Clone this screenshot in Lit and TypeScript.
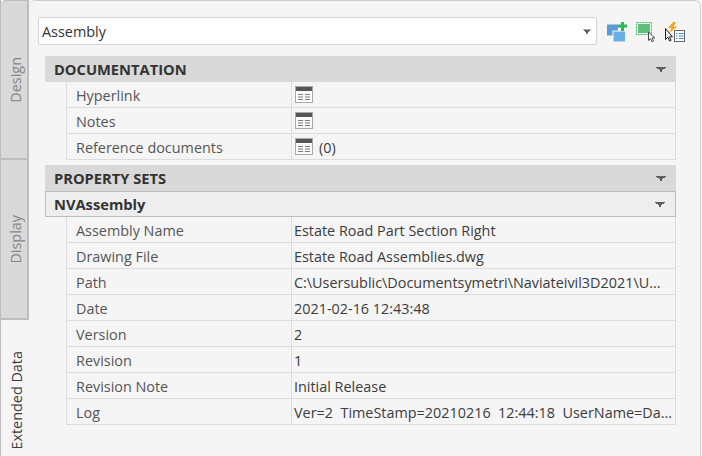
import { LitElement, html, css } from "lit";
import { customElement } from "lit/decorators.js";

const tableIcon = html`<svg class="ti" width="18" height="17" viewBox="0 0 18 17">
  <rect x="0.5" y="0.5" width="17" height="16" fill="#fafafa" stroke="#a8a8a8"/>
  <rect x="1" y="1" width="16" height="4" fill="#555"/>
  <path d="M3 8.500h5M10 8.500h5M3 11h5M10 11h5M3 13.500h5M10 13.500h5" stroke="#7c7c7c" stroke-width="1" fill="none"/>
</svg>`;

const caret = html`<svg class="caret" width="10" height="5" viewBox="0 0 10 5" shape-rendering="crispEdges"><path d="M0 0h10v1h-1v1h-2v1h-1v2h-2v-2h-1v-1h-2v-1h-1z" fill="#5f5f5f"/></svg>`;

@customElement("app-root")
export class AppRoot extends LitElement {
  static styles = css`
    :host { display: flex; width: 702px; height: 456px; overflow: hidden; background: #fafafa; box-sizing: border-box; padding-right: 1px;
      font-family: "Open Sans", "Noto Sans", sans-serif; font-size: 14.4px; color: #3c3c3c; }
    .rail { width: 29px; flex: none; display: flex; flex-direction: column; background: #f5f5f5; border-left: 1px solid #bdbdbd; box-sizing: border-box; }
    .tab { box-sizing: border-box; width: 28px; height: 160px; flex: none; display: flex; align-items: center; justify-content: center; padding-left: 2px; }
    .tab span { writing-mode: vertical-rl; transform: rotate(180deg); white-space: nowrap; }
    .tab.off { background: #d9d9d9; border-right: 2px solid #bdbdbd; border-bottom: 2px solid #bdbdbd; color: #858585; }
    .tab.first { border-top: 1px solid #bdbdbd; border-top-left-radius: 5px; }
    .tab.on { color: #3c3c3c; }
    .main { flex: 1; box-sizing: border-box; padding: 16px 15px 0 9px; background: #f5f5f5; border-top: 1px solid #cfcfcf; border-right: 1px solid #cfcfcf; border-top-left-radius: 6px; border-top-right-radius: 6px; }
    .top { display: flex; align-items: center; height: 28px; }
    .combo { width: 559px; height: 28px; flex: none; box-sizing: border-box; background: #fff; border: 1px solid #d4d4d4; border-radius: 2px; display: flex; align-items: center; justify-content: space-between; padding: 0 4px 0 3px; color: #333; }
    .combo .caret { transform: scale(0.85); }
    .tools { display: flex; align-items: center; gap: 9px; margin-left: 10px; padding-top: 2px; }
    .tools svg { display: block; flex: none; }
    .content { margin: 11px 9px 0 7px; display: flex; flex-direction: column; }
    .hd { height: 26px; box-sizing: border-box; display: flex; align-items: center; justify-content: space-between; padding: 0 10px 0 9px; background: #d9d9d9; font-weight: 700; font-size: 14.7px; color: #333; }
    .hd.sub { background: #eeeeee; border: 1px solid #bcbcbc; padding: 0 10px 0 8px; }
    .rows { border-left: 1px solid #dcdcdc; border-right: 1px solid #dcdcdc; margin-left: 21px; }
    .rows.gap { margin-bottom: 5px; }
    .row { height: 26px; box-sizing: border-box; border-bottom: 1px solid #dcdcdc; display: grid; grid-template-columns: 224px 1fr; }
    .row .k { padding: 2px 0 0 9px; display: flex; align-items: center; color: #555; white-space: nowrap; }
    .row .v { border-left: 1px solid #dcdcdc; display: flex; align-items: center; padding-left: 2px; min-width: 0; gap: 6px; color: #3c3c3c; }
    .row .t { white-space: pre; padding-top: 2px; }
    .ti { display: block; margin: -1px 0 0 1px; }
  `;

  private row(k: string, v: unknown) {
    return html`<div class="row"><div class="k">${k}</div><div class="v">${v}</div></div>`;
  }

  render() {
    const vals: [string, string][] = [
      ["Assembly Name", "Estate Road Part Section Right"],
      ["Drawing File", "Estate Road Assemblies.dwg"],
      ["Path", "C:\\Usersublic\\Documentsymetri\\Naviateivil3D2021\\U..."],
      ["Date", "2021-02-16 12:43:48"],
      ["Version", "2"],
      ["Revision", "1"],
      ["Revision Note", "Initial Release"],
      ["Log", "Ver=2  TimeStamp=20210216  12:44:18  UserName=Da..."],
    ];
    return html`
      <div class="rail">
        <div class="tab off first"><span>Design</span></div>
        <div class="tab off"><span>Display</span></div>
        <div class="tab on"><span>Extended Data</span></div>
      </div>
      <div class="main">
        <div class="top">
          <div class="combo"><span>Assembly</span>${caret}</div>
          <div class="tools">
            <svg width="20" height="20" viewBox="0 0 20 20">
              <rect x="0" y="2.500" width="11" height="11" fill="#5b9bd5"/>
              <rect x="6" y="9" width="12.500" height="11" fill="#6aaee6" stroke="#f5f5f5"/>
              <path d="M11 4h9M15.500 0v9" stroke="#2fb457" stroke-width="3" fill="none"/>
            </svg>
            <svg width="20" height="20" viewBox="0 0 20 20">
              <rect x="0.500" y="0.500" width="15" height="12" fill="#f0f7f2" stroke="#45b36c" stroke-dasharray="2 1"/>
              <rect x="2" y="2" width="12" height="9" fill="#60bf7c"/>
              <path d="M12.500 10v8.500l2-1.800 1.500 3.100 1.600-.8-1.500-3h2.700z" fill="#f4f4f4" stroke="#4a4a4a"/>
            </svg>
            <svg width="20" height="20" viewBox="0 0 20 20">
              <path d="M8 0l-5 6h3.500l-2 5 7.500-6.500h-3.500l2.500-4.500z" fill="#f0a820"/>
              <path d="M0.500 6.500v11l2.300-2.300 1.800 3.800 1.500-.7-1.700-3.500h3z" fill="#f4f4f4" stroke="#1f1f1f"/>
              <rect x="9.500" y="8.500" width="10" height="11" fill="#fff" stroke="#666"/>
              <path d="M11 11.500h1.500M14 11.500h4.500M11 14h1.500M14 14h4.500M11 16.500h1.500M14 16.500h4.500" stroke="#3b8ad0"/>
            </svg>
          </div>
        </div>
        <div class="content">
          <div class="hd"><span>DOCUMENTATION</span>${caret}</div>
          <div class="rows gap">
            ${this.row("Hyperlink", tableIcon)}
            ${this.row("Notes", tableIcon)}
            ${this.row("Reference documents", html`${tableIcon}<span class="t">(0)</span>`)}
          </div>
          <div class="hd"><span>PROPERTY SETS</span>${caret}</div>
          <div class="hd sub"><span>NVAssembly</span>${caret}</div>
          <div class="rows">
            ${vals.map(([k, v]) => this.row(k, html`<span class="t">${v}</span>`))}
          </div>
        </div>
      </div>
    `;
  }
}
